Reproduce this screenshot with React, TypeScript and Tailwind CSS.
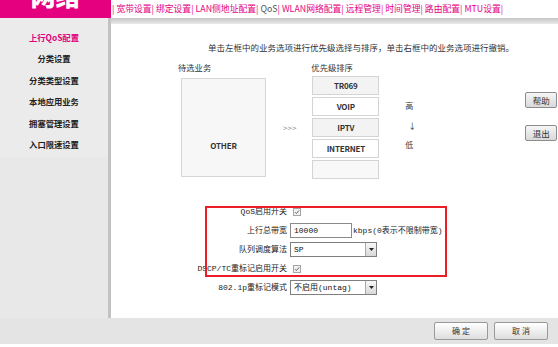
const navLinks = ["宽带设置", "绑定设置", "LAN侧地址配置", "QoS", "WLAN网络配置", "远程管理", "时间管理", "路由配置", "MTU设置"];
const sideItems = ["上行QoS配置", "分类设置", "分类类型设置", "本地应用业务", "拥塞管理设置", "入口限速设置"];
const priority = [
  { name: "TR069", bg: "bg-[#f3f3f3]" },
  { name: "VOIP", bg: "bg-white" },
  { name: "IPTV", bg: "bg-[#f3f3f3]" },
  { name: "INTERNET", bg: "bg-white" },
  { name: "", bg: "bg-[#f8f8f8]" },
];

function CheckBox() {
  return (
    <span className="ml-[3px] inline-flex h-[8px] w-[8px] items-center justify-center border border-[#a5a5a5] bg-[#f2f2f2]">
      <svg width="6" height="6" viewBox="0 0 6 6">
        <path d="M1 3.2 L2.4 4.6 L5 1.4" fill="none" stroke="#666" strokeWidth="1" />
      </svg>
    </span>
  );
}

function Select({ value }: { value: string }) {
  return (
    <div className="flex h-[15px] w-[87px] items-center border border-[#7f7f7f] bg-white">
      <span className="flex-1 pl-[3px] text-[8px] leading-none text-[#111]">{value}</span>
      <span className="flex h-full w-[11px] items-center justify-center border-l border-[#aaa] bg-gradient-to-b from-[#f7f7f7] to-[#d8d8d8]">
        <svg width="5" height="3" viewBox="0 0 5 3">
          <path d="M0 0 H5 L2.5 3 Z" fill="#222" />
        </svg>
      </span>
    </div>
  );
}

function FormRow({ label, children }: { label: string; children: React.ReactNode }) {
  return (
    <div className="flex h-[19px] items-center">
      <div className="w-[177px] pr-[1px] text-right text-[8px] leading-none text-[#222]">{label}</div>
      <div className="flex items-center pl-[2px]">{children}</div>
    </div>
  );
}

export default function App() {
  return (
    <div className="flex h-[347px] w-[558px] flex-col overflow-hidden bg-white font-['Liberation_Mono','Noto_Sans_CJK_SC',monospace]">
      <div className="flex h-[318px]">
        {/* sidebar */}
        <aside className="flex w-[111px] flex-col">
          <div className="flex h-[18px] justify-center overflow-hidden bg-[#e4007f]">
            <span className="mt-[-17px] font-['Noto_Sans_CJK_SC',sans-serif] text-[25px] font-black leading-none text-white">网络</span>
          </div>
          <div className="flex-1 border-r-[3px] border-[#c2c2c2] bg-[#e8e8e8]">
            <ul className="bg-[#ebebeb] pb-[3px] pt-[8px] font-['Noto_Sans_CJK_SC',sans-serif]">
              {sideItems.map((s, i) => (
                <li
                  key={s}
                  className={`flex h-[21.5px] items-center justify-center text-[8.3px] font-bold ${i === 0 ? "text-[#e4007f]" : "text-[#222]"}`}
                >
                  {s}
                </li>
              ))}
            </ul>
          </div>
        </aside>

        {/* main */}
        <main className="flex flex-1 flex-col">
          <nav className="flex h-[18px] items-center pl-[1px] font-['Noto_Sans_CJK_SC',sans-serif] text-[8.8px] text-[#e4007f]">
            <span>|</span>
            {navLinks.map((l) => (
              <span key={l} className="whitespace-pre">
                <span className={l === "QoS" ? "text-[#555]" : ""}> {l}</span>|
              </span>
            ))}
          </nav>
          <div className="h-[6px] bg-gradient-to-b from-[#c6c6c6] to-[#e9e9e9]" />

          <div className="relative flex-1 pt-[17px] font-['Noto_Sans_CJK_SC',sans-serif]">
            <p className="h-[12px] pl-[97px] text-[8.5px] leading-[12px] text-[#333]">
              单击左框中的业务选项进行优先级选择与排序，单击右框中的业务选项进行撤销。
            </p>

            <div className="mt-[8px] flex items-start">
              {/* candidate */}
              <div className="ml-[67px] w-[88px]">
                <div className="h-[12px] text-[8.3px] leading-[12px] text-[#333]">待选业务</div>
                <div className="ml-[3px] mt-[5px] h-[99px] w-[85px] border border-[#d6d6d6] bg-[#f7f7f7] pt-[61px] text-center text-[8px] font-semibold tracking-tight text-[#333]">
                  OTHER
                </div>
              </div>

              <div className="ml-[17px] mt-[62px] text-[8px] leading-[10px] text-[#888]">&gt;&gt;&gt;</div>

              {/* priority */}
              <div className="ml-[15px] w-[68px]">
                <div className="h-[12px] text-[8.3px] leading-[12px] text-[#333]">优先级排序</div>
                <div className="ml-[1px] mt-[3px] flex w-[67px] flex-col gap-[2px]">
                  {priority.map((p, i) => (
                    <div
                      key={i}
                      className={`flex h-[19px] items-center justify-center border border-[#d4d4d4] ${p.bg} text-[8px] font-semibold tracking-tight text-[#333]`}
                    >
                      {p.name}
                    </div>
                  ))}
                </div>
              </div>

              <div className="ml-[26px] mt-[40px] flex flex-col gap-[9.5px] text-[8px] leading-[10px] text-[#333]">
                <span>高</span>
                <span className="pl-[3px]">↓</span>
                <span>低</span>
              </div>

              <div className="ml-[109px] mt-[31px] flex flex-col gap-[17px]">
                {["帮助", "退出"].map((b) => (
                  <button
                    key={b}
                    className="h-[16px] w-[32px] rounded-[2px] border border-[#8c8c8c] bg-gradient-to-b from-[#f6f6f6] to-[#d9d9d9] text-[8.5px] leading-none text-[#333]"
                  >
                    {b}
                  </button>
                ))}
              </div>
            </div>

            {/* form */}
            <div className="mt-[23px] font-['Liberation_Mono','Noto_Sans_CJK_SC',monospace]">
              <FormRow label="QoS启用开关">
                <CheckBox />
              </FormRow>
              <FormRow label="上行总带宽">
                <div className="flex h-[15px] w-[62px] items-center border border-[#8a8a8a] bg-white pl-[3px] text-[8px] text-[#111]">10000</div>
                <span className="ml-[1px] text-[8px] leading-none text-[#222]">kbps(0表示不限制带宽)</span>
              </FormRow>
              <FormRow label="队列调度算法">
                <Select value="SP" />
              </FormRow>
              <FormRow label="DSCP/TC重标记启用开关">
                <CheckBox />
              </FormRow>
              <FormRow label="802.1p重标记模式">
                <Select value="不启用(untag)" />
              </FormRow>
            </div>

            {/* annotation box */}
            <div className="pointer-events-none absolute left-[94px] top-[182px] h-[71px] w-[242px] border-2 border-[#ee1c25]" />
          </div>
        </main>
      </div>

      <footer className="flex h-[26px] items-center justify-end gap-[6px] bg-[#e4e4e4] pr-[10px] font-['Noto_Sans_CJK_SC',sans-serif]">
        {["确 定", "取 消"].map((b) => (
          <button
            key={b}
            className="h-[18px] w-[54px] whitespace-pre rounded-[2px] border border-[#999] bg-gradient-to-b from-white to-[#dedede] text-[8px] leading-none text-[#333]"
          >
            {b}
          </button>
        ))}
      </footer>
      <div className="h-[3px] bg-white" />
    </div>
  );
}
